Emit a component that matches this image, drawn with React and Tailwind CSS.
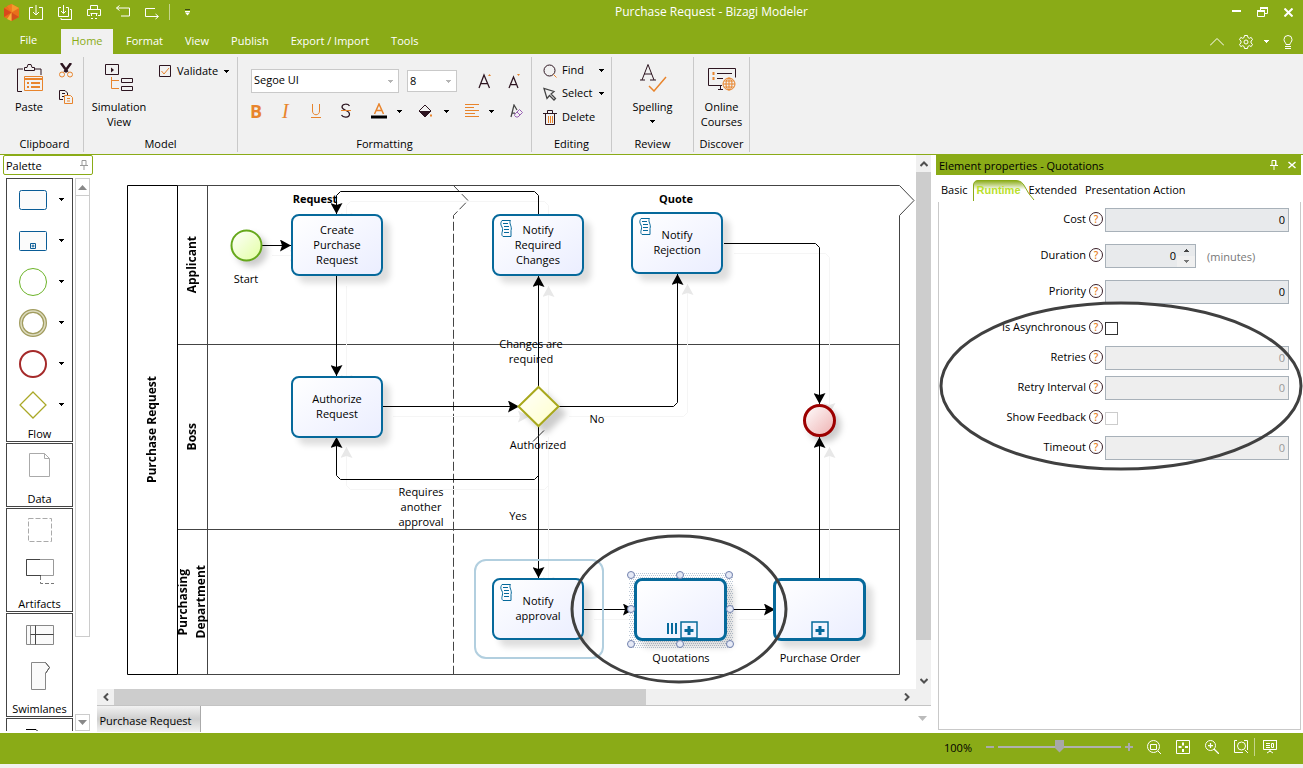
import React, { useState } from 'react';

const menuTabs = ['Format', 'View', 'Publish', 'Export / Import', 'Tools'];

const Caret = ({ className = 'text-black' }) => (
  <svg width="5" height="3" viewBox="0 0 5 3" className={className} shapeRendering="crispEdges">
    <path d="M0 0h5v1H0zM1 1h3v1H1zM2 2h1v1H2z" fill="currentColor" />
  </svg>
);

const Icon = ({ w = 14, h = 14, children, className = '' }) => (
  <svg width={w} height={h} viewBox={`0 0 ${w} ${h}`} fill="none" stroke="currentColor" className={`shrink-0 ${className}`}>
    {children}
  </svg>
);

const TitleBar = () => (
  <div className="flex h-6 items-center pl-1 text-white">
    <Icon w={15} h={17}>
      <g stroke="none">
        <path d="M7.500 0L15 4v9l-7.500 4L0 13V4z" fill="#e8701a" />
        <path d="M7.500 0L15 4 7.500 8.500z" fill="#f39a2d" />
        <path d="M0 4l7.500 4.500L0 13z" fill="#d9481c" />
        <path d="M7.500 8.500V17L15 13z" fill="#d4501b" />
        <path d="M7.500 8.500L3 15l4.500 2z" fill="#f6b13c" />
        <path d="M7.500 8.500L3 2l4.500-2z" fill="#f07a20" />
      </g>
    </Icon>
    <div className="ml-2.5 flex items-center gap-[15px]">
      <button aria-label="Save">
        <Icon h={15}>
          <path d="M4 2.500H.5v12h13v-12H10M7 0v10M4 7l3 3 3-3" />
        </Icon>
      </button>
      <button aria-label="Save all">
        <Icon h={15}>
          <path d="M3 2.500H.5v9h10v-9H8M5.500 0v8M3 6l2.500 2.500L8 6M12 4.500h1.500v10H3V13" />
        </Icon>
      </button>
      <button aria-label="Print">
        <Icon h={15}>
          <path d="M3.500 4V.5h7V4M3 10.500H.5v-6h13v6H11M3.500 8.500h7M4.500 8v3M9.500 8v3M4 13.500h2M8 13.500h2" />
        </Icon>
      </button>
      <button aria-label="Undo">
        <Icon h={15}>
          <path d="M3.500.5l-3 2.500 3 2.500M.5 3H13.500v8H5" />
        </Icon>
      </button>
      <button aria-label="Redo">
        <Icon h={15}>
          <path d="M10 3.500H.5v8H13M10.500 9l3 2.500-3 2.500" />
        </Icon>
      </button>
    </div>
    <div className="ml-2.5 h-4 w-px bg-[#c5d58b]" />
    <button aria-label="Customize" className="ml-3.5">
      <Icon w={7} h={7}>
        <path d="M1 .5h5" stroke="#3a4a10" />
        <path d="M1 2.500h5" />
        <path d="M1 3.500h5L3.500 6.500z" fill="#fff" stroke="none" />
      </Icon>
    </button>
    <h1 className="flex-1 text-center text-[12px] leading-6">Purchase Request - Bizagi Modeler</h1>
    <div className="mr-2.5 flex items-center gap-4">
      <button aria-label="Minimize">
        <Icon w={9} h={10}><path d="M0 4h9" strokeWidth="2" /></Icon>
      </button>
      <button aria-label="Restore">
        <Icon w={11} h={10}>
          <path d="M3.500 3V1h7v5.500H8M.5 4h7v5.500h-7z" />
          <path d="M3 1h8M0 4h8" strokeWidth="2" />
        </Icon>
      </button>
      <button aria-label="Close">
        <Icon w={9} h={9}><path d="M.5.5l8 8M8.500.5l-8 8" strokeWidth="2" /></Icon>
      </button>
    </div>
  </div>
);

const MenuBar = () => (
  <nav className="flex h-[30px] items-end text-[11px] text-white">
    <button className="h-[25px] w-[57px] pb-0.5">File</button>
    <button className="mr-0.5 ml-1 h-[25px] w-[52px] bg-[#f1f1f1] text-[#8aab17]">Home</button>
    {menuTabs.map((tab) => (
      <button key={tab} className="h-[25px] px-[11px]">{tab}</button>
    ))}
    <div className="mr-2.5 ml-auto flex h-[25px] items-center">
      <button aria-label="Collapse ribbon">
        <Icon h={8}><path d="M0 7.500l7-7 7 7" /></Icon>
      </button>
      <button aria-label="Settings" className="ml-[15px] flex items-center gap-2.5">
        <Icon w={15}>
          <path d="M5.500.5h3l.4 2 1.400.8 1.900-.9 1.300 2.300-1.500 1.300v2l1.500 1.300-1.300 2.300-1.900-.9-1.400.8-.4 2h-3l-.4-2-1.400-.8-1.900.9L.5 9.300 2 8V6L.5 4.700l1.300-2.300 1.900.9 1.400-.8z" />
          <circle cx="7" cy="7" r="2" />
        </Icon>
        <Caret className="text-white" />
      </button>
      <button aria-label="Help" className="ml-3.5">
        <Icon w={10} h={14}>
          <path d="M3 9.500C3 7.500 1 7 1 4.500a4 4 0 018 0C9 7 7 7.500 7 9.500zM2 11.500h6M2 13.500h6" />
        </Icon>
      </button>
    </div>
  </nav>
);

const Group = ({ label, className, children }) => (
  <section className={`flex h-[95px] flex-col border-r border-[#c9c9c9] ${className}`}>
    <div className="min-h-0 flex-1">{children}</div>
    <h2 className="text-center leading-4">{label}</h2>
  </section>
);

const Ribbon = () => {
  const [font, setFont] = useState('Segoe UI');
  const [size, setSize] = useState('8');

  return (
    <div className="flex h-[101px] border-b border-[#8aab17] bg-[#f1f1f1] pt-[3px] pl-1.5 text-[11px] text-black">
      <Group label="Clipboard" className="w-[78px]">
        <div className="flex pt-1.5">
          <button className="flex w-[46px] flex-col items-center leading-[15px]">
            <Icon w={27} h={29} className="mb-[7px]">
              <path d="M6 28.500H1.500V6H7M19 6h6v6M8.500 7.500V4.500H11L12 1.500h3l1 3h2.500v3z" stroke="#2d1520" />
              <path d="M8.500 13.500h18v14h-18z" stroke="#e8842c" />
              <path d="M8 16h19M11 20h2M15 20h9M11 24h2M15 24h9" stroke="#e8842c" strokeWidth="2" />
            </Icon>
            Paste
          </button>
          <div className="flex flex-col gap-3 pl-[7px]">
            <button aria-label="Cut">
              <Icon w={14} h={15}>
                <path d="M2 0l6.500 9M12 0L5.500 9" stroke="#2d1520" strokeWidth="2.500" />
                <circle cx="3" cy="11.500" r="2.500" stroke="#e8842c" />
                <circle cx="11" cy="11.500" r="2.500" stroke="#e8842c" />
              </Icon>
            </button>
            <button aria-label="Copy">
              <Icon w={14} h={14}>
                <path d="M4 9.500H.5v-9H6L8.500 3v2M3 3.500h3M3 6.500h2" stroke="#2d1520" />
                <path d="M5.500 5.500h6l2 2v6h-8zM8 8.500h3M8 11h3" stroke="#e8842c" />
              </Icon>
            </button>
          </div>
        </div>
      </Group>

      <Group label="Model" className="w-[154px]">
        <div className="flex items-start pt-1.5">
          <button className="flex w-[70px] flex-col items-center leading-[15px]">
            <Icon w={28} h={29} className="mb-[7px]">
              <path d="M.5 1.500h13v10H.5zM16.500 15.500h11v4h-11zM16.500 23.500h11v4h-11z" stroke="#2d1520" />
              <path d="M6 4.500v5l3-2.500z" fill="#2d1520" stroke="none" />
              <path d="M6.500 14v11.500H14M6.500 17.500H14" stroke="#e8842c" />
            </Icon>
            Simulation
            <br />
            View
          </button>
          <button className="ml-[5px] flex items-center gap-1.5">
            <Icon w={12} h={12}>
              <path d="M.5.5h11v11H.5z" stroke="#2d1520" />
              <path d="M2.500 6L5 9l5-6" stroke="#e8842c" />
            </Icon>
            Validate
            <Caret />
          </button>
        </div>
      </Group>

      <Group label="Formatting" className="w-[294px]">
        <div className="flex items-center pt-3 pl-[13px]">
          <div className="relative w-[148px]">
            <select aria-label="Font" value={font} onChange={(e) => setFont(e.target.value)} className="h-6 w-full appearance-none border border-[#c9c9c9] bg-white px-0.5 pb-0.5">
              <option>Segoe UI</option>
            </select>
            <span className="pointer-events-none absolute top-[11px] right-1.5"><Caret className="text-[#b5b5b5]" /></span>
          </div>
          <div className="relative ml-2 w-[50px]">
            <select aria-label="Font size" value={size} onChange={(e) => setSize(e.target.value)} className="h-[22px] w-full appearance-none border border-[#c9c9c9] bg-white px-0.5">
              <option>8</option>
            </select>
            <span className="pointer-events-none absolute top-[10px] right-1.5"><Caret className="text-[#b5b5b5]" /></span>
          </div>
          <button aria-label="Grow font" className="ml-[21px]">
            <Icon w={14} h={16}>
              <path d="M1 15L6 2l5.500 13M3 10.500h6.500" stroke="#2d1520" strokeWidth="1.250" />
              <path d="M10 3l1.500-2L13 3z" fill="#e8842c" stroke="none" />
            </Icon>
          </button>
          <button aria-label="Shrink font" className="ml-4">
            <Icon w={14} h={16}>
              <path d="M1 15L5.500 4 10 15M3 11.500h5" stroke="#2d1520" strokeWidth="1.250" />
              <path d="M9 1l1.500 2L12 1z" fill="#e8842c" stroke="none" />
            </Icon>
          </button>
        </div>
        <div className="mt-2 flex h-5 items-center pl-3 text-[#e8842c]">
          <button aria-label="Bold" className="w-[30px] text-left text-[18px] leading-5 font-bold">B</button>
          <button aria-label="Italic" className="w-[30px] pl-0.5 text-left font-['Liberation_Serif',serif] text-[20px] leading-5 italic">I</button>
          <button aria-label="Underline">
            <Icon w={12} h={16}><path d="M2.500 1v7c0 5 7 5 7 0V1M1 14.500h10" /></Icon>
          </button>
          <button aria-label="Strikethrough" className="ml-[18px]">
            <Icon w={12} h={16}>
              <path d="M9.500 3C8 .5 2 .5 2 4s7.500 3 7.500 7-6.500 4-8 1" stroke="#2d1520" strokeWidth="1.250" />
              <path d="M1 7.500h10" />
            </Icon>
          </button>
          <button aria-label="Font color" className="ml-[19px] flex items-center gap-2.5">
            <Icon w={16} h={16}>
              <path d="M3.500 11L8 1l4.500 10M5 7.500h6" strokeWidth="1.500" />
              <path d="M0 14h16" stroke="#000" strokeWidth="3" />
            </Icon>
            <Caret />
          </button>
          <button aria-label="Fill color" className="ml-4 flex items-center gap-2.5">
            <Icon w={16} h={16}>
              <path d="M1 8l6-6 6 6-6 6z" stroke="#2d1520" />
              <path d="M1 8h12l-6 6z" fill="#2d1520" stroke="none" />
              <path d="M13 11.500v2" strokeWidth="2" />
            </Icon>
            <Caret />
          </button>
          <button aria-label="Align" className="ml-4 flex items-center gap-2.5">
            <Icon w={14} h={14}><path d="M0 .5h14M0 3.500h9M0 6.500h14M0 9.500h10M0 12.500h14" /></Icon>
            <Caret />
          </button>
          <button aria-label="Clear formatting" className="ml-4">
            <Icon w={13} h={14}>
              <path d="M1 13L4 1l3 5M2 9h3" stroke="#444" strokeWidth="1.250" />
              <path d="M5 10l4.500-4.500 3 3L8 13H6l-1.500-1.500zM7 8l3 3" stroke="#9a62b5" />
            </Icon>
          </button>
        </div>
      </Group>

      <Group label="Editing" className="w-[80px]">
        <div className="flex flex-col pt-0.5 pl-[11px]">
          <button className="flex h-[23px] items-center gap-[5px]">
            <Icon w={14} h={14}>
              <circle cx="6.500" cy="6.500" r="5.500" stroke="#2d1520" />
              <path d="M10.500 10.500l3 3" stroke="#e8842c" />
            </Icon>
            <span className="w-8 text-left">Find</span>
            <Caret />
          </button>
          <button className="flex h-[23px] items-center gap-[5px]">
            <Icon w={14} h={14}><path d="M1 1.500l3 10 2.500-3 4.500 4.500 1.500-1.500L8 7l3-2.500z" stroke="#444" strokeWidth="1.250" /></Icon>
            <span className="w-8 text-left">Select</span>
            <Caret />
          </button>
          <button className="flex h-6 items-center gap-[5px]">
            <Icon w={14} h={15}>
              <path d="M0 3.500h14M4.500 3V.5h5V3M2.500 4v10.500h9V4" stroke="#2d1520" />
              <path d="M5.500 6v7M7.500 6v7M9.500 6v7" stroke="#e8842c" />
            </Icon>
            Delete
          </button>
        </div>
      </Group>

      <Group label="Review" className="w-[82px]">
        <button className="flex w-full flex-col items-center pt-1.5 leading-[15px]">
          <Icon w={28} h={29} className="mb-[7px]">
            <path d="M1 17h5M11 17h6M3 17L9 1.500 15 17M5 11h8" stroke="#2d1520" />
            <path d="M10 23l5 5L27 14" stroke="#e8842c" strokeWidth="1.500" />
          </Icon>
          Spelling
          <span className="pt-1.5"><Caret /></span>
        </button>
      </Group>

      <Group label="Discover" className="w-[56px]">
        <button className="flex w-full flex-col items-center pt-1.5 leading-[15px]">
          <Icon w={28} h={29} className="mb-[7px]">
            <path d="M14 22.500H.5v-17h27v9M10 26.500h5M12.500 23v3M9 10.500h15M9 15.500h6" stroke="#2d1520" />
            <g stroke="#e8842c">
              <path d="M5.500 9v3M5.500 14v3" strokeWidth="2" />
              <circle cx="21" cy="21" r="6" />
              <path d="M15 21h12M21 15v12M16 18h10M16 24h10" />
              <ellipse cx="21" cy="21" rx="3" ry="6" />
            </g>
          </Icon>
          Online
          <br />
          Courses
        </button>
      </Group>
    </div>
  );
};

const flowIcons = [
  { name: 'Task', shape: <rect x=".5" y="4.500" width="27" height="19" rx="2" stroke="#0a5c96" fill="#fbfbfb" /> },
  {
    name: 'Sub-process',
    shape: (
      <>
        <rect x=".5" y="4.500" width="27" height="19" rx="1" stroke="#0a5c96" fill="#fbfbfb" />
        <path d="M11.500 16.500h5v5h-5zM14 17.500v3M12.500 19h3" stroke="#0a5c96" />
      </>
    ),
  },
  { name: 'Start event', shape: <circle cx="14" cy="14" r="13.500" stroke="#6cb328" /> },
  {
    name: 'Intermediate event',
    shape: (
      <>
        <circle cx="14" cy="14" r="12" stroke="#a19c5e" strokeWidth="4" />
        <circle cx="14" cy="14" r="12" stroke="#dedcc0" strokeWidth="1.500" />
      </>
    ),
  },
  { name: 'End event', shape: <circle cx="14" cy="14" r="13" stroke="#a52a2a" strokeWidth="2" /> },
  { name: 'Gateway', shape: <path d="M14 1l13 13-13 13L1 14z" stroke="#aaa827" strokeWidth="1.250" /> },
];

const PaletteGroup = ({ label, className, children }) => (
  <div className={`mb-px flex shrink-0 flex-col justify-between border border-[#444] ${className}`}>
    <div>{children}</div>
    {label && <div className="text-center leading-[14px]">{label}</div>}
  </div>
);

const PaletteItem = ({ name, menu, children }) => (
  <button aria-label={name} className={`flex h-[41px] w-full items-center ${menu ? 'pl-3' : 'justify-center'}`}>
    <Icon w={28} h={28}>{children}</Icon>
    {menu && <span className="ml-3"><Caret /></span>}
  </button>
);

const Palette = () => (
  <aside className="flex w-[97px] shrink-0 flex-col overflow-hidden">
    <div className="ml-[3px] flex h-5 w-[90px] shrink-0 items-center justify-between rounded-xs border border-[#8aab17] px-0.5">
      <h2 className="pt-0.5">Palette</h2>
      <Icon w={8} h={10} className="mr-0.5 text-[#999]"><path d="M2 .5h4v5H2zM0 5.500h8M4 6v4" /></Icon>
    </div>
    <div className="mt-[3px] mb-0.5 ml-1.5 flex min-h-0 flex-1">
      <div className="flex w-[67px] flex-col overflow-hidden">
        <PaletteGroup label="Flow" className="h-[264px]">
          {flowIcons.map((item) => (
            <PaletteItem key={item.name} name={item.name} menu>{item.shape}</PaletteItem>
          ))}
        </PaletteGroup>
        <PaletteGroup label="Data" className="h-[64px]">
          <PaletteItem name="Data object">
            <path d="M3.500 2.500h15l5 5v18h-20zM18.500 2.500v5h5" stroke="#aaa" />
          </PaletteItem>
        </PaletteGroup>
        <PaletteGroup label="Artifacts" className="h-[104px]">
          <PaletteItem name="Group">
            <path d="M2.500 2.500h23v23h-23z" stroke="#aaa" strokeDasharray="5 2" />
          </PaletteItem>
          <PaletteItem name="Annotation">
            <path d="M.5 2.500h27v16H.5z" stroke="#999" />
            <path d="M14 2.500H.5v16H15" stroke="#444" />
            <path d="M14.500 19v7.500H28" stroke="#777" strokeDasharray="4 2" />
          </PaletteItem>
        </PaletteGroup>
        <PaletteGroup label="Swimlanes" className="h-[104px]">
          <PaletteItem name="Pool">
            <path d="M.5 4.500h27v19H.5zM4.500 4.500v19" stroke="#888" fill="#fafafa" />
            <path d="M9.500 4.500v19M4.500 13.500h23" stroke="#444" />
          </PaletteItem>
          <PaletteItem name="Phase">
            <path d="M5.500.5h14l4 5-4 6v16h-14z" stroke="#888" fill="#fafafa" />
            <path d="M19.500.5l4 5-4 6" stroke="#555" />
          </PaletteItem>
        </PaletteGroup>
        <PaletteGroup className="h-[104px]">
          <PaletteItem name="Sequence flow"><path d="M0 3.500h10l2 2v12" stroke="#000" /></PaletteItem>
        </PaletteGroup>
      </div>
      <div className="ml-0.5 flex w-[15px] flex-col justify-between">
        <div className="flex h-[459px] flex-col border border-[#ccc]">
          <button aria-label="Scroll up" className="flex h-[17px] items-center justify-center border-b border-[#ccc]">
            <Icon w={9} h={5}><path d="M0 5l4.500-5L9 5z" fill="#888" stroke="none" /></Icon>
          </button>
        </div>
        <button aria-label="Scroll down" className="flex h-[17px] items-center justify-center border border-[#ccc]">
          <Icon w={9} h={5}><path d="M0 0l4.500 5L9 0z" fill="#888" stroke="none" /></Icon>
        </button>
      </div>
    </div>
  </aside>
);

const edges = [
  'M165 90.500H194',
  'M239.500 121V221',
  'M286 251.500H422',
  'M441.500 231V121',
  'M441.500 59V40.500L437.500 36.500H243.500L239.500 40.500V59',
  'M462 251.500H576.500L580.500 247.500V119',
  'M627 88.500H718.500L722.500 92.500V249',
  'M441.500 272V423',
  'M441.500 320.500L437.500 324.500H243.500L239.500 320.500V282',
  'M487 454.500H537',
  'M632 454.500H678',
  'M722.500 423V282',
];

const tasks = [
  { x: 194, y: 59, text: ['Create', 'Purchase', 'Request'] },
  { x: 194, y: 221, text: ['Authorize', 'Request'] },
  { x: 395, y: 59, text: ['Notify', 'Required', 'Changes'], script: true },
  { x: 534, y: 57, text: ['Notify', 'Rejection'], script: true },
  { x: 395, y: 423, text: ['Notify', 'approval'], script: true },
];

const subProcesses = [
  { x: 537, y: 423, multi: true },
  { x: 676, y: 423 },
];

const labels = [
  { x: 149, y: 116, text: ['Start'] },
  { x: 218, y: 36, text: ['Request'], bold: true },
  { x: 579, y: 36, text: ['Quote'], bold: true },
  { x: 434, y: 181, text: ['Changes are', 'required'] },
  { x: 500, y: 256, text: ['No'] },
  { x: 441, y: 282, text: ['Authorized'] },
  { x: 324, y: 329, text: ['Requires', 'another', 'approval'] },
  { x: 421, y: 353, text: ['Yes'] },
  { x: 584, y: 495, text: ['Quotations'] },
  { x: 723, y: 495, text: ['Purchase Order'] },
];

const handles = [
  [534, 420], [583, 420], [632, 420],
  [534, 454], [633, 454],
  [534, 489], [583, 489], [633, 489],
];

const Lines = ({ text }) => text.map((line) => <div key={line}>{line}</div>);

const Diagram = () => (
  <div className="relative min-w-0 flex-1 overflow-hidden leading-[15px]">
    <svg className="absolute top-0 left-0" width="819" height="534" fill="none">
      <defs>
        <marker id="arrow" markerUnits="userSpaceOnUse" markerWidth="11" markerHeight="12" refX="11" refY="6" orient="auto">
          <path d="M0 0l11 6-11 6 2-6z" fill="#000" />
        </marker>
        <marker id="arrow-shadow" markerUnits="userSpaceOnUse" markerWidth="11" markerHeight="12" refX="11" refY="6" orient="auto">
          <path d="M0 0l11 6-11 6 2-6z" fill="#e8e8e8" />
        </marker>
        <linearGradient id="start" x1="0" y1="0" x2="1" y2="1">
          <stop stopColor="#fff" />
          <stop offset="1" stopColor="#e2ffa0" />
        </linearGradient>
        <linearGradient id="end" x1="0" y1="0" x2="1" y2="1">
          <stop stopColor="#fff" />
          <stop offset="1" stopColor="#eeb0b0" />
        </linearGradient>
        <linearGradient id="gateway" x1="0" y1="0" x2="1" y2="1">
          <stop stopColor="#fff" />
          <stop offset="1" stopColor="#ffffc8" />
        </linearGradient>
        <pattern id="hatch" width="4" height="4" patternUnits="userSpaceOnUse">
          <path d="M0 0h1v1H0zM2 0h1v1H2zM1 2h1v1H1zM3 2h1v1H3z" fill="#bcc8d6" />
        </pattern>
      </defs>
      <g stroke="#444">
        <path d="M80.500 30.500H802.500L817 45.500 802.500 60.500V519.500H80.500" />
        <path d="M110.500 30.500V519M80.500 189.500H802M80.500 374.500H802" />
        <path d="M356.500 30.500L371 45.500 356.500 60.500V519" strokeDasharray="9 3" />
        <path d="M80.500 30.500H30.500V519.500H80.500M80.500 30.500V519.500" stroke="#000" />
      </g>
      <g stroke="#f5f5f5" transform="translate(10 10)">
        {edges.map((d) => <path key={d} d={d} markerEnd="url(#arrow-shadow)" />)}
      </g>
      <g stroke="#000">
        {edges.map((d) => <path key={d} d={d} markerEnd="url(#arrow)" />)}
        <path d="M436 286.500l11-11" stroke="#333" />
      </g>
      <circle cx="149.500" cy="90.500" r="15" fill="url(#start)" stroke="#66a81b" strokeWidth="2" className="drop-shadow-[5px_5px_3px_#0003]" />
      <circle cx="722.500" cy="265.500" r="15" fill="url(#end)" stroke="#9c0000" strokeWidth="3" className="drop-shadow-[5px_5px_3px_#0003]" />
      <path d="M441.500 232l20 19.500-20 19.500-20-19.500z" fill="url(#gateway)" stroke="#a8a81d" strokeWidth="2" className="drop-shadow-[7px_7px_3px_#0003]" />
      <rect x="532" y="417" width="104" height="76" fill="url(#hatch)" />
    </svg>

    <div className="absolute top-[404px] left-[377px] h-[100px] w-[130px] rounded-xl border-2 border-[#b2cfdf]" />

    {tasks.map((task) => (
      <div
        key={`${task.x}-${task.y}`}
        className="absolute flex h-[62px] w-[92px] flex-col items-center justify-center rounded-lg border-2 border-[#06699b] bg-linear-to-br from-white to-[#ebeeff] pb-0.5 shadow-[7px_7px_6px_#0002]"
        style={{ left: task.x, top: task.y }}
      >
        {task.script && (
          <Icon w={12} h={17} className="absolute top-1 left-1.5 text-[#06699b]">
            <path d="M2 .5h8.500c-2 3 2 6 .5 10v6H3C0 14 4 11 2 7 0 4 1 2 2 .5zM3 3.500h5M4 6.500h5M4 9.500h5M4 12.500h5" />
          </Icon>
        )}
        <Lines text={task.text} />
      </div>
    ))}

    {subProcesses.map((node) => (
      <div
        key={node.x}
        className="absolute flex h-[63px] w-[93px] items-end justify-center rounded-lg border-3 border-[#06699b] bg-linear-to-br from-white to-[#ebeeff] shadow-[7px_7px_6px_#0002]"
        style={{ left: node.x, top: node.y }}
      >
        {node.multi && (
          <Icon w={12} h={18} className="text-[#06699b]">
            <path d="M1 3v11M5 3v11M9 3v11" strokeWidth="2" />
          </Icon>
        )}
        <Icon w={18} h={17} className={node.multi ? 'mr-[-3px] ml-px text-[#06699b]' : 'text-[#06699b]'}>
          <path d="M1 1h16v16H1z" strokeWidth="1.500" />
          <path d="M9 5v9M4.500 9.500h9" strokeWidth="3" />
        </Icon>
      </div>
    ))}

    {labels.map((label) => (
      <div
        key={label.text[0]}
        className={`absolute w-[100px] text-center ${label.bold ? 'font-bold' : ''}`}
        style={{ left: label.x - 50, top: label.y }}
      >
        <Lines text={label.text} />
      </div>
    ))}

    <div className="absolute top-[30px] left-[30px] flex h-[489px] w-[80px] text-center text-[12px] leading-[18px] font-bold">
      <div className="flex w-[50px] items-center justify-center">
        <span className="rotate-180 [writing-mode:vertical-rl]">Purchase Request</span>
      </div>
      <div className="flex w-[30px] flex-col">
        <div className="flex h-[159px] items-center justify-center">
          <span className="rotate-180 [writing-mode:vertical-rl]">Applicant</span>
        </div>
        <div className="flex h-[185px] items-center justify-center">
          <span className="rotate-180 [writing-mode:vertical-rl]">Boss</span>
        </div>
        <div className="flex h-[145px] items-center justify-center">
          <span className="shrink-0 rotate-180 [writing-mode:vertical-rl]">Purchasing<br />Department</span>
        </div>
      </div>
    </div>

    <svg className="absolute top-0 left-0" width="819" height="534" fill="none">
      {handles.map(([x, y]) => (
        <circle key={`${x}-${y}`} cx={x} cy={y} r="3.500" fill="#e6eaf6" stroke="#7080ad" />
      ))}
      <ellipse cx="582" cy="454" rx="107" ry="73" stroke="#404040" strokeWidth="3" />
    </svg>
  </div>
);

const Canvas = () => (
  <main className="flex min-w-0 flex-1 flex-col">
    <div className="flex min-h-0 flex-1">
      <Diagram />
      <div className="flex w-[15px] flex-col bg-[#f0f0f0] text-[#505050]">
        <button aria-label="Scroll up" className="flex h-[17px] items-center justify-center">
          <Icon w={8} h={6}><path d="M.5 5L4 1.500 7.500 5" strokeWidth="2" /></Icon>
        </button>
        <div className="flex-1 bg-[#cdcdcd]" />
        <button aria-label="Scroll down" className="mt-8 flex h-[17px] items-center justify-center">
          <Icon w={8} h={6}><path d="M.5 1L4 4.500 7.500 1" strokeWidth="2" /></Icon>
        </button>
      </div>
    </div>
    <div className="flex h-4 items-center bg-[#f0f0f0] pr-4 text-[#505050]">
      <button aria-label="Scroll left" className="flex w-[17px] justify-center">
        <Icon w={6} h={8}><path d="M5 .5L1.500 4 5 7.500" strokeWidth="2" /></Icon>
      </button>
      <div className="h-4 w-[65%] bg-[#cdcdcd]" />
      <button aria-label="Scroll right" className="ml-auto flex w-[17px] justify-center">
        <Icon w={6} h={8}><path d="M1 .5L4.500 4 1 7.500" strokeWidth="2" /></Icon>
      </button>
    </div>
    <div className="flex h-7 items-start justify-between border-t border-[#c4c4c4] pr-1">
      <button className="h-[26px] w-[104px] border-r border-[#aaa] bg-linear-to-b from-[#f2f2f2] via-[#cfcfcf] to-[#f2f2f2] pt-1 pr-1.5">Purchase Request</button>
      <button aria-label="More tabs" className="mt-2.5">
        <Icon w={9} h={5}><path d="M0 0h9L4.500 5z" fill="#bbb" stroke="none" /></Icon>
      </button>
    </div>
  </main>
);

const fields = [
  { id: 'cost', label: 'Cost' },
  { id: 'duration', label: 'Duration', type: 'spinner' },
  { id: 'priority', label: 'Priority' },
  { id: 'async', label: 'Is Asynchronous', type: 'checkbox' },
  { id: 'retries', label: 'Retries', disabled: true, tight: true },
  { id: 'interval', label: 'Retry Interval', disabled: true, tight: true },
  { id: 'feedback', label: 'Show Feedback', type: 'checkbox', disabled: true, tight: true },
  { id: 'timeout', label: 'Timeout', disabled: true, tight: true },
];

const HelpIcon = () => (
  <span className="flex size-3.5 shrink-0 items-center justify-center rounded-full border border-[#3b2028] text-[10px] leading-3 font-semibold text-[#e8842c]">?</span>
);

const Field = ({ id, label, type, disabled, tight }) => {
  const [value, setValue] = useState('0');
  const [checked, setChecked] = useState(false);

  return (
    <div className={`flex h-6 items-center ${tight ? 'mt-1.5' : 'mt-3 first:mt-0'}`}>
      <div className="flex w-[166px] items-center justify-end gap-[3px] pr-0.5 pb-0.5">
        <label htmlFor={id} className="pt-px">{label}</label>
        <HelpIcon />
      </div>
      {type === 'checkbox' && (
        <input
          id={id}
          type="checkbox"
          checked={checked}
          disabled={disabled}
          onChange={(e) => setChecked(e.target.checked)}
          className="size-[13px] appearance-none border border-[#333] bg-white disabled:border-[#ccc]"
        />
      )}
      {type === 'spinner' && (
        <>
          <div className="flex h-6 w-[91px] border border-[#a8b1b9] bg-[#e8eaec]">
            <input id={id} value={value} onChange={(e) => setValue(e.target.value)} className="min-w-0 flex-1 text-right" />
            <div className="ml-px flex w-[18px] flex-col">
              <button aria-label="Increase" className="flex flex-1 items-center justify-center"><Caret className="rotate-180 text-[#444]" /></button>
              <button aria-label="Decrease" className="flex flex-1 items-center justify-center bg-[#f0f0f0]"><Caret className="text-[#777]" /></button>
            </div>
          </div>
          <span className="pl-[11px] pt-0.5 text-[#777]">(minutes)</span>
        </>
      )}
      {!type && (
        <input
          id={id}
          value={value}
          disabled={disabled}
          onChange={(e) => setValue(e.target.value)}
          className="h-6 min-w-0 flex-1 border border-[#a8b1b9] bg-[#e8eaec] pr-[3px] pb-0.5 text-right disabled:bg-[#eeeeee] disabled:text-[#999]"
        />
      )}
    </div>
  );
};

const Properties = () => (
  <aside className="relative ml-[5px] flex w-[367px] shrink-0 flex-col pr-0.5">
    <div className="flex h-5 items-center bg-[#8aab17] pr-[5px] pl-[3px]">
      <h2 className="flex-1 pt-0.5">Element properties - Quotations</h2>
      <button aria-label="Pin" className="text-white">
        <Icon w={8} h={10}><path d="M2 .5h4v5H2zM0 5.500h8M4 6v4M5.500 1v4" /></Icon>
      </button>
      <button aria-label="Close panel" className="ml-2.5 text-white">
        <Icon w={8} h={8}><path d="M.5 1l7 6M7.500 1l-7 6" strokeWidth="1.500" /></Icon>
      </button>
    </div>
    <div className="mt-1 flex h-[23px] items-center pl-[5px]">
      <button>Basic</button>
      <button className="relative ml-[5px] h-[21px] w-[56px] text-left">
        <svg className="absolute top-0 left-0" width="62" height="21" fill="none">
          <defs>
            <linearGradient id="tab" x1="0" y1="0" x2="0" y2="1">
              <stop stopColor="#8aab17" />
              <stop offset=".45" stopColor="#fff" />
            </linearGradient>
          </defs>
          <path d="M.5 21V5Q1 .5 5 .5H43Q49 .5 52 7T61 20" fill="url(#tab)" stroke="#8aab17" />
        </svg>
        <span className="relative pl-1 font-['Liberation_Sans',sans-serif] font-bold text-[#b9e02c]">Runtime</span>
      </button>
      <button>Extended</button>
      <button className="ml-2">Presentation Action</button>
    </div>
    <div className="mb-[3px] ml-0.5 flex-1 border border-t-0 border-[#c9c9c9] pt-1.5 pr-[11px]">
      {fields.map((field) => <Field key={field.id} {...field} />)}
    </div>
    <svg className="pointer-events-none absolute top-[145px] left-0.5" width="366" height="172" fill="none">
      <ellipse cx="183" cy="86" rx="180" ry="83" stroke="#404040" strokeWidth="3" />
    </svg>
  </aside>
);

const StatusBar = () => {
  const [zoom, setZoom] = useState(50);

  return (
    <footer className="flex h-[31px] shrink-0 items-center justify-end bg-[#8aab17] pr-[26px] pb-1 text-white">
      <label htmlFor="zoom" className="pt-1 text-black">100%</label>
      <button aria-label="Zoom out" className="ml-3.5 h-0.5 w-2 bg-[#aaa]" />
      <input
        id="zoom"
        type="range"
        value={zoom}
        onChange={(e) => setZoom(Number(e.target.value))}
        className="mx-1 h-3.5 w-[123px] appearance-none bg-transparent [&::-webkit-slider-runnable-track]:h-0.5 [&::-webkit-slider-runnable-track]:bg-[#b0b0b0] [&::-webkit-slider-thumb]:mt-[-6px] [&::-webkit-slider-thumb]:h-[13px] [&::-webkit-slider-thumb]:w-[9px] [&::-webkit-slider-thumb]:appearance-none [&::-webkit-slider-thumb]:bg-[#a8a8a8] [&::-webkit-slider-thumb]:[clip-path:polygon(0_0,100%_0,100%_65%,50%_100%,0_65%)]"
      />
      <button aria-label="Zoom in" className="text-[#aaa]">
        <Icon w={8} h={8}><path d="M0 4h8M4 0v8" strokeWidth="2" /></Icon>
      </button>
      <div className="ml-3.5 flex gap-[15px]">
        <button aria-label="Zoom selection">
          <Icon><circle cx="6.500" cy="6.500" r="6" /><path d="M3.500 4.500h6v5h-6zM11 11l3 3" /></Icon>
        </button>
        <button aria-label="Fit page">
          <Icon>
            <path d="M.5.5h13v13H.5z" />
            <path d="M7 2.500v3M7 9v3M2.500 7h3M9 7h3" strokeWidth="2" />
          </Icon>
        </button>
        <button aria-label="Magnify">
          <Icon><circle cx="5.500" cy="5.500" r="5" /><path d="M9 9l5 5M5.500 3v5M3 5.500h5" strokeWidth="1.250" /></Icon>
        </button>
        <button aria-label="Find in diagram">
          <Icon><path d="M3 .5H.5v12H9M10 .5h3.500V10M11 10l3 3" /><circle cx="7.500" cy="6" r="4" /></Icon>
        </button>
      </div>
      <div className="ml-1.5 h-[18px] w-px bg-[#c5d58b]" />
      <button aria-label="Presentation" className="ml-2">
        <Icon><path d="M0 .5h14M.5.5v9h13v-9M3 3.500h4M3 5.500h4M3 7.500h4M8.500 3.500h2v4h-2zM7 10v2M4 13l3-2 3 2" /></Icon>
      </button>
    </footer>
  );
};

const App = () => (
  <div className="flex h-screen flex-col bg-[#f1f1f1] font-['Open_Sans',sans-serif] text-[11px] text-black">
    <header className="shrink-0 bg-[#8aab17]">
      <TitleBar />
      <MenuBar />
    </header>
    <Ribbon />
    <div className="flex min-h-0 flex-1 bg-white">
      <Palette />
      <Canvas />
      <Properties />
    </div>
    <StatusBar />
    <div className="h-1 shrink-0" />
  </div>
);

export default App;
